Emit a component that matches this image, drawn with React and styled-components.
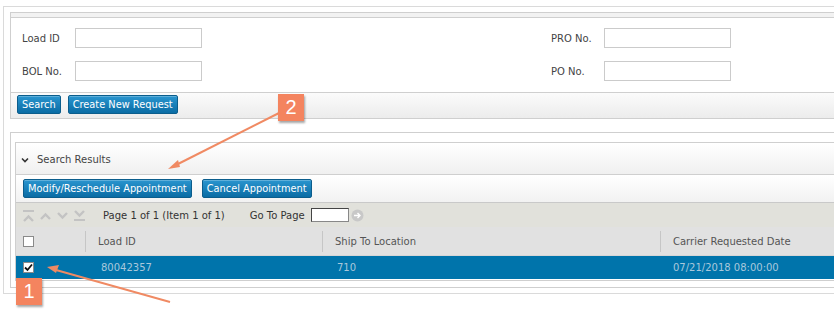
import React from "react";
import styled, { createGlobalStyle } from "styled-components";

const Global = createGlobalStyle`
  body {
    margin: 0;
    background: #fff;
    font-family: "DejaVu Sans", Verdana, sans-serif;
    font-size: 10px;
    color: #444;
  }
`;

const Page = styled.div`
  position: relative;
  width: 840px;
  height: 313px;
  padding: 6px 0 0 3px;
  box-sizing: border-box;
  overflow: hidden;
`;

const Frame = styled.div`
  width: 831px;
  box-sizing: border-box;
  border: 1px solid #dadada;
  border-right: none;
  padding: 5px 0 5px 6px;
`;

const Panel = styled.div`
  border: 1px solid #cfcfcf;
  border-right: none;
  margin-top: ${(p) => p.$gap || 0}px;
  padding: ${(p) => p.$pad || 0};
`;

const TopStrip = styled.div`
  height: 4px;
  background: #f2f2f2;
  border-bottom: 1px solid #cfcfcf;
`;

const Form = styled.div`
  display: grid;
  grid-template-columns: 53px 127px 349px 53px 127px;
  grid-auto-rows: 20px;
  row-gap: 13px;
  align-items: center;
  padding: 10px 0 11px 11px;
`;

const Label = styled.label`
  color: #444;
  grid-column: ${(p) => p.$col || "auto"};
`;

const Input = styled.input`
  height: 20px;
  box-sizing: border-box;
  border: 1px solid #cbcbcb;
  margin: 0;
  padding: 0 3px;
  background: #fff;
  grid-column: ${(p) => p.$col};
`;

const ButtonBar = styled.div`
  display: flex;
  gap: ${(p) => p.$gap}px;
  height: 26px;
  box-sizing: border-box;
  padding: ${(p) => p.$pad};
  border-top: 1px solid #cfcfcf;
  background: linear-gradient(#fbfbfb, #ececec);
`;

const Button = styled.button`
  height: 19px;
  margin: 0;
  padding: 0 4px;
  border: 1px solid #0b5d8c;
  border-radius: 2px;
  background: linear-gradient(#2a95cf, #0a6ca4);
  color: #fff;
  font-family: inherit;
  font-size: 9.8px;
  line-height: 17px;
  box-shadow: inset 0 1px 0 rgba(255, 255, 255, 0.25);
`;

const Results = styled.div`
  border: 1px solid #cfcfcf;
  border-right: none;
`;

const ResultsHeader = styled.div`
  display: flex;
  align-items: center;
  gap: 8px;
  height: 31px;
  box-sizing: border-box;
  padding: 2px 0 0 5px;
  border-bottom: 1px solid #cfcfcf;
  background: linear-gradient(#ffffff, #f0f0f0);
  color: #444;
  height: 32px;
`;

const Toolbar = styled(ButtonBar)`
  height: 27px;
  border-top: none;
  background: linear-gradient(#ffffff, #f2f2f2);
`;

const Pager = styled.div`
  display: flex;
  align-items: center;
  height: 25px;
  box-sizing: border-box;
  padding-left: 6px;
  border-top: 1px solid #c9c9c9;
  background: #e1e1db;
  color: #333;
`;

const PagerIcons = styled.div`
  display: flex;
  gap: 4px;
  margin-right: 17px;
`;

const PageText = styled.span`
  margin-right: ${(p) => p.$mr}px;
`;

const GoInput = styled.input`
  width: 38px;
  height: 14px;
  box-sizing: border-box;
  margin: 0 2px 0 0;
  padding: 0;
  border: 1px solid #888;
  border-top-color: #444;
  border-left-color: #444;
  background: #fff;
`;

const Row = styled.div`
  display: grid;
  grid-template-columns: 69px 237px 338px 1fr;
  align-items: center;
  height: ${(p) => p.$h}px;
  background: ${(p) => (p.$selected ? "#0074ab" : "#e1e1e1")};
  color: ${(p) => (p.$selected ? "#a9c8dc" : "#555")};
  border-bottom: 1px solid ${(p) => (p.$selected ? "#fff" : "#d6d6d6")};
`;

const BoxCell = styled.div`
  padding-left: 7px;
  display: flex;
`;

const Cell = styled.div`
  position: relative;
  padding-left: ${(p) => p.$pl || 13}px;
  white-space: nowrap;
  &::before {
    content: "";
    display: ${(p) => (p.$sep ? "block" : "none")};
    position: absolute;
    left: 0;
    top: -5px;
    bottom: -5px;
    width: 1px;
    background: #c6c6c6;
  }
`;

const Check = styled.span`
  width: 11px;
  height: 11px;
  box-sizing: border-box;
  border: 1px solid #8a8a8a;
  background: #fff;
  display: flex;
  align-items: center;
  justify-content: center;
`;

const Badge = styled.div`
  position: absolute;
  left: ${(p) => p.$x}px;
  top: ${(p) => p.$y}px;
  width: 26px;
  height: 27px;
  background: #f4845f;
  color: #fff;
  font-family: "Liberation Sans", Arial, sans-serif;
  font-size: 20px;
  line-height: 27px;
  text-align: center;
  box-shadow: 1px 2px 2px rgba(0, 0, 0, 0.35);
`;

const Overlay = styled.svg`
  position: absolute;
  left: 0;
  top: 0;
  pointer-events: none;
`;

const PagerIcon = ({ kind }) => {
  const up = kind === "first" || kind === "up";
  const chev = up ? "M2 10 L6.5 5.5 L11 10" : "M2 4 L6.5 8.5 L11 4";
  const shift = kind === "first" ? 2 : kind === "last" ? -2 : 0;
  return (
    <svg width="13" height="13" viewBox="0 0 13 13">
      {kind === "first" && <rect x="1" y="1" width="11" height="2" fill="#c3c3c3" />}
      {kind === "last" && <rect x="1" y="10" width="11" height="2" fill="#c3c3c3" />}
      <path
        d={chev}
        transform={`translate(0 ${shift})`}
        fill="none"
        stroke="#c3c3c3"
        strokeWidth="2.4"
      />
    </svg>
  );
};

const CheckMark = () => (
  <svg width="9" height="9" viewBox="0 0 9 9">
    <path d="M1 4.5 L3.5 7 L8 1.5" fill="none" stroke="#111" strokeWidth="1.8" />
  </svg>
);

export default function App() {
  return (
    <>
      <Global />
      <Page>
        <Frame>
          <Panel>
            <TopStrip />
            <Form>
              <Label>Load ID</Label>
              <Input $col="2" />
              <Label $col="4">PRO No.</Label>
              <Input $col="5" />
              <Label>BOL No.</Label>
              <Input $col="2" />
              <Label $col="4">PO No.</Label>
              <Input $col="5" />
            </Form>
            <ButtonBar $gap={7} $pad="2px 0 0 6px">
              <Button>Search</Button>
              <Button>Create New Request</Button>
            </ButtonBar>
          </Panel>

          <Panel $gap={13} $pad="9px 0 6px 4px">
            <Results>
              <ResultsHeader>
                <svg width="8" height="6" viewBox="0 0 8 6">
                  <path d="M1 1.5 L4 4.5 L7 1.5" fill="none" stroke="#333" strokeWidth="1.6" />
                </svg>
                Search Results
              </ResultsHeader>
              <Toolbar $gap={10} $pad="4px 0 0 7px">
                <Button>Modify/Reschedule Appointment</Button>
                <Button>Cancel Appointment</Button>
              </Toolbar>
              <Pager>
                <PagerIcons>
                  <PagerIcon kind="first" />
                  <PagerIcon kind="up" />
                  <PagerIcon kind="down" />
                  <PagerIcon kind="last" />
                </PagerIcons>
                <PageText $mr={25}>Page 1 of 1 (Item 1 of 1)</PageText>
                <PageText $mr={6}>Go To Page</PageText>
                <GoInput />
                <svg width="13" height="13" viewBox="0 0 13 13">
                  <circle cx="6.5" cy="6.5" r="6" fill="#c8c8c8" />
                  <path d="M3 6.5 H9 M6.5 4 L9 6.5 L6.5 9" fill="none" stroke="#fff" strokeWidth="1.4" />
                </svg>
              </Pager>
              <Row $h={28}>
                <BoxCell>
                  <Check />
                </BoxCell>
                <Cell $sep>Load ID</Cell>
                <Cell $sep>Ship To Location</Cell>
                <Cell $sep>Carrier Requested Date</Cell>
              </Row>
              <Row $h={23} $selected>
                <BoxCell>
                  <Check>
                    <CheckMark />
                  </Check>
                </BoxCell>
                <Cell $pl={16}>80042357</Cell>
                <Cell $pl={15}>710</Cell>
                <Cell>07/21/2018 08:00:00</Cell>
              </Row>
            </Results>
          </Panel>
        </Frame>

        <Overlay width="840" height="313" viewBox="0 0 840 313">
          <line x1="281" y1="112" x2="176" y2="165" stroke="#f08a63" strokeWidth="2" />
          <path d="M168 169 L178 160 L180 167 Z" fill="#f08a63" />
          <line x1="170" y1="302" x2="56" y2="270" stroke="#f08a63" strokeWidth="2" />
          <path d="M47 267 L59 265 L56 273 Z" fill="#f08a63" />
        </Overlay>
        <Badge $x={278} $y={94}>2</Badge>
        <Badge $x={16} $y={278}>1</Badge>
      </Page>
    </>
  );
}
